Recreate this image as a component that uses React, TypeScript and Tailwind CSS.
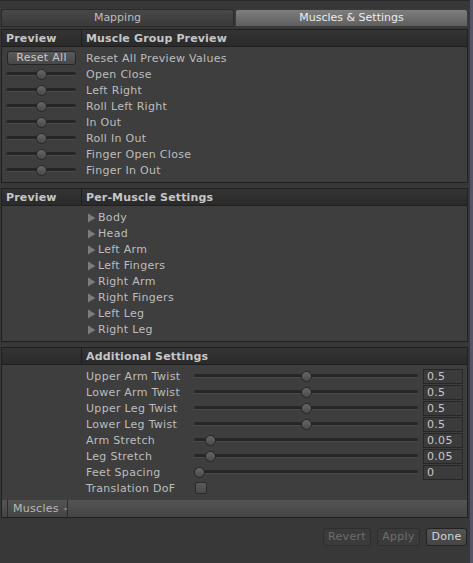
import React from 'react';

// ─── Small controls ────────────────────────────────
function Slider({ value, className }: { value: number; className: string }) {
  return (
    <div className={`relative h-[16px] shrink-0 ${className}`}>
      <div className="absolute left-0 right-0 top-[6px] h-[4px] rounded-full bg-[#262626] border-b border-[#4a4a4a]" />
      <div
        className="absolute top-[3px] -ml-[5px] h-[11px] w-[11px] rounded-full border border-[#262626] bg-linear-to-b from-[#666666] to-[#4a4a4a]"
        style={{ left: `calc(5px + ${value} * (100% - 10px))` }}
      />
    </div>
  );
}

function Arrow() {
  return (
    <svg width="9" height="10" viewBox="0 0 9 10" className="shrink-0">
      <polygon points="1,0.5 8.5,5 1,9.5" fill="#7c7c7c" />
    </svg>
  );
}

function Section({ left, title, children }: { left: string; title: string; children: React.ReactNode }) {
  return (
    <div className="border border-[#202020] bg-[#3e3e3e]">
      <div className="flex h-[17px] border-b border-[#1f1f1f] bg-linear-to-b from-[#343434] to-[#2a2a2a] font-bold tracking-[0.15px] text-[#c6c6c6] leading-[15px]">
        <div className="w-[80px] shrink-0 border-r border-[#1e1e1e] pl-[4px] pt-[1px]">{left}</div>
        <div className="pl-[4px] pt-[1px]">{title}</div>
      </div>
      {children}
    </div>
  );
}

const groupRows = ['Open Close', 'Left Right', 'Roll Left Right', 'In Out', 'Roll In Out', 'Finger Open Close', 'Finger In Out'];
const muscleRows = ['Body', 'Head', 'Left Arm', 'Left Fingers', 'Right Arm', 'Right Fingers', 'Left Leg', 'Right Leg'];
const additional = [
  { label: 'Upper Arm Twist', value: 0.5, text: '0.5' },
  { label: 'Lower Arm Twist', value: 0.5, text: '0.5' },
  { label: 'Upper Leg Twist', value: 0.5, text: '0.5' },
  { label: 'Lower Leg Twist', value: 0.5, text: '0.5' },
  { label: 'Arm Stretch', value: 0.05, text: '0.05' },
  { label: 'Leg Stretch', value: 0.05, text: '0.05' },
  { label: 'Feet Spacing', value: 0, text: '0' },
];

export default function App() {
  return (
    <div className="flex h-[563px] w-[473px] overflow-hidden bg-[#383838] font-['DejaVu_Sans',sans-serif] text-[11px] text-[#bdbdbd]">
      <div className="flex w-[470px] flex-col border-t border-[#2a2a2a] pl-[1px] pr-[2px] pt-[8px]">
        {/* Tabs */}
        <div className="flex h-[18px] gap-[1px]">
          <div className="flex w-[233px] items-center justify-center rounded-t-[3px] border border-[#2a2a2a] bg-linear-to-b from-[#484848] to-[#3a3a3a] text-[#bcbcbc]">
            Mapping
          </div>
          <div className="flex flex-1 items-center justify-center rounded-t-[3px] border border-[#3a3a3a] bg-linear-to-b from-[#7e7e7e] to-[#5e5e5e] text-[#ececec]">
            Muscles &amp; Settings
          </div>
        </div>

        <div className="mt-[2px] tracking-[0.3px]">
          <Section left="Preview" title="Muscle Group Preview">
            <div className="pb-[4px] pt-[3px]">
              <div className="flex h-[16px] items-center">
                <div className="w-[80px] shrink-0 pl-[5px]">
                  <div className="flex h-[14px] w-[69px] items-center justify-center rounded-[3px] border border-[#262626] bg-linear-to-b from-[#5a5a5a] to-[#474747] text-[#c8c8c8]">
                    Reset All
                  </div>
                </div>
                <div className="h-[16px] pl-[4px] pt-[2px] leading-[14px]">Reset All Preview Values</div>
              </div>
              {groupRows.map((r) => (
                <div key={r} className="flex h-[16px] items-center">
                  <div className="w-[80px] shrink-0 pl-[4px]">
                    <Slider value={0.5} className="w-[70px]" />
                  </div>
                  <div className="h-[16px] pl-[4px] pt-[2px] leading-[14px]">{r}</div>
                </div>
              ))}
            </div>
          </Section>
        </div>

        <div className="mt-[5px] tracking-[0.3px]">
          <Section left="Preview" title="Per-Muscle Settings">
            <div className="pb-[4px] pt-[3px]">
              {muscleRows.map((r) => (
                <div key={r} className="flex h-[16px] items-center">
                  <div className="w-[80px] shrink-0" />
                  <div className="flex h-[16px] items-center gap-[2px] pl-[5px] pt-[1px]">
                    <Arrow />
                    <span className="leading-[14px]">{r}</span>
                  </div>
                </div>
              ))}
            </div>
          </Section>
        </div>

        <div className="mt-[5px] tracking-[0.3px]">
          <Section left="" title="Additional Settings">
            <div className="pt-[3px]">
              {additional.map((r) => (
                <div key={r.label} className="flex h-[16px] items-center">
                  <div className="w-[80px] shrink-0" />
                  <div className="h-[16px] w-[112px] shrink-0 pl-[4px] pt-[2px] leading-[14px]">{r.label}</div>
                  <Slider value={r.value} className="w-[224px]" />
                  <div className="ml-[5px] mt-[1px] h-[15px] w-[40px] border border-[#272727] bg-[#3b3b3b] pl-[3px] leading-[13px] text-[#c6c6c6]">
                    {r.text}
                  </div>
                </div>
              ))}
              <div className="flex h-[16px] items-center">
                <div className="w-[80px] shrink-0" />
                <div className="h-[16px] w-[113px] shrink-0 pl-[4px] pt-[2px] leading-[14px]">Translation DoF</div>
                <div className="h-[12px] w-[12px] rounded-[2px] border border-[#2a2a2a] bg-linear-to-b from-[#5a5a5a] to-[#4a4a4a]" />
              </div>
            </div>
            {/* Bottom toolbar */}
            <div className="mt-[4px] flex h-[17px] bg-linear-to-b from-[#545454] to-[#454545] pl-[5px]">
              <div className="flex w-[61px] items-center border-x border-[#2c2c2c] pl-[5px] pt-[1px] text-[#b8b8b8]">
                Muscles
                <svg width="5" height="3" viewBox="0 0 5 3" className="ml-[5px]">
                  <polygon points="0,0 5,0 2.5,3" fill="#a0a0a0" />
                </svg>
              </div>
            </div>
          </Section>
        </div>

        {/* Action buttons */}
        <div className="mt-[10px] flex justify-end gap-[6px] pr-[1px] tracking-[0.3px]">
          <div className="flex h-[18px] w-[48px] items-center justify-center rounded-[3px] border border-[#2e2e2e] bg-[#3b3b3b] text-[#6e6e6e]">
            Revert
          </div>
          <div className="flex h-[18px] w-[43px] items-center justify-center rounded-[3px] border border-[#2e2e2e] bg-[#3b3b3b] text-[#6e6e6e]">
            Apply
          </div>
          <div className="flex h-[18px] w-[41px] items-center justify-center rounded-[3px] border border-[#222222] bg-linear-to-b from-[#545454] to-[#444444] text-[#d6d6d6]">
            Done
          </div>
        </div>
      </div>
      <div className="w-[3px] bg-[#55546a]" />
    </div>
  );
}
